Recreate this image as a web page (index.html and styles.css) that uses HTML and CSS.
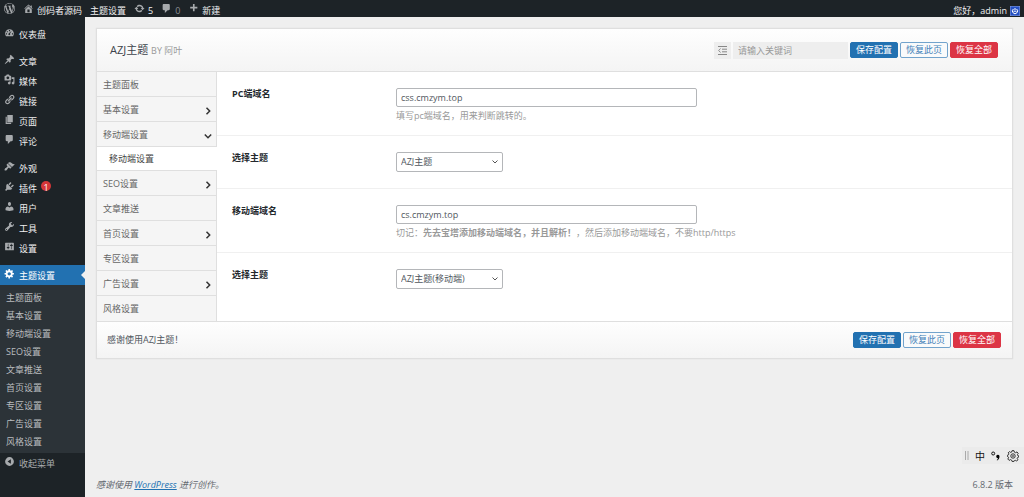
FILE: index.html
```html
<!DOCTYPE html>
<html lang="zh-CN">
<head>
<meta charset="utf-8">
<title>主题设置</title>
<link rel="stylesheet" href="styles.css">
</head>
<body>
<header class="adminbar">
  <a class="bar-item" href="#" aria-label="WordPress"><svg class="icon" viewBox="0 0 20 20"><path d="M20 10c0-5.51-4.49-10-10-10C4.48 0 0 4.49 0 10c0 5.52 4.48 10 10 10 5.51 0 10-4.48 10-10zM7.78 15.37L4.37 6.22c.55-.02 1.17-.08 1.17-.08.5-.06.44-1.13-.06-1.11 0 0-1.45.11-2.37.11-.18 0-.37 0-.58-.01C4.12 2.69 6.87 1.11 10 1.11c2.33 0 4.45.87 6.05 2.34-.68-.11-1.65.39-1.65 1.58 0 .74.45 1.36.9 2.1.35.61.55 1.36.55 2.46 0 1.49-1.4 5-1.4 5l-3.03-8.37c.54-.02.82-.17.82-.17.5-.05.44-1.25-.06-1.22 0 0-1.44.12-2.38.12-.87 0-2.33-.12-2.33-.12-.5-.03-.56 1.2-.06 1.22l.92.08 1.26 3.41zM17.41 10c.24-.64.74-1.87.43-4.25.7 1.29 1.05 2.71 1.05 4.25 0 3.29-1.73 6.24-4.4 7.78.97-2.59 1.94-5.2 2.92-7.78zM6.1 18.09C3.12 16.65 1.11 13.53 1.11 10c0-1.3.23-2.48.72-3.59C3.25 10.3 4.67 14.2 6.1 18.09zm4.03-6.63l2.58 6.98c-.86.29-1.76.45-2.71.45-.79 0-1.57-.11-2.29-.33.81-2.38 1.62-4.74 2.42-7.1z"/></svg></a>
  <a class="bar-item" href="#"><svg class="icon" viewBox="0 0 20 20"><path d="M16 8.5l1.53 1.53-1.06 1.06L10 4.6l-6.47 6.49-1.06-1.06L10 2.5l4 4v-2h2v4zm-6-2.46l6 5.99V18H4v-5.97zM12 17v-5H8v5h4z"/></svg><span>创码者源码</span></a>
  <a class="bar-item" href="#"><span>主题设置</span></a>
  <a class="bar-item" href="#"><svg class="icon" viewBox="0 0 20 20"><path d="M10.2 3.28c3.53 0 6.43 2.61 6.92 6h2.08l-3.5 4-3.5-4h2.32c-.45-1.97-2.21-3.45-4.32-3.45-1.45 0-2.73.71-3.54 1.78L4.95 5.66C6.23 4.2 8.11 3.28 10.2 3.28zm-.4 13.44c-3.52 0-6.43-2.61-6.92-6H.8l3.5-4c1.17 1.33 2.33 2.67 3.5 4H5.48c.45 1.97 2.21 3.45 4.32 3.45 1.45 0 2.73-.71 3.54-1.78l1.71 1.95c-1.28 1.46-3.15 2.38-5.25 2.38z"/></svg><span>5</span></a>
  <a class="bar-item" href="#"><svg class="icon" viewBox="0 0 20 20"><path d="M5 2h9c1.1 0 2 .9 2 2v7c0 1.1-.9 2-2 2h-2l-5 5v-5H5c-1.1 0-2-.9-2-2V4c0-1.1.9-2 2-2z"/></svg><span class="bar-zero">0</span></a>
  <a class="bar-item" href="#"><svg class="icon" viewBox="0 0 20 20"><path d="M17 7v3h-5v5H9v-5H4V7h5V2h3v5h5z"/></svg><span>新建</span></a>
  <a class="bar-item bar-user" href="#"><span>您好，admin</span><svg class="avatar" viewBox="0 0 10 10"><path class="avatar-bg" d="M0 0h10v10H0z"/><path class="avatar-mark" d="M3.4 3a2.6 2.6 0 1 0 3.2 0M5 2v2M3.5 5.2h3"/></svg></a>
</header>

<div class="shell">
  <nav class="sidebar" aria-label="主菜单">
    <ul class="menu">
      <li><a class="menu-link" href="#"><svg class="icon" viewBox="0 0 20 20"><path fill-rule="evenodd" d="M3.76 17h12.48c1.1-1.37 1.76-3.11 1.76-5 0-4.42-3.58-8-8-8s-8 3.58-8 8c0 1.89.66 3.63 1.76 5zM9 5.500h2v2H9zM5 7.500h2v2H5zM3.500 11.500h2v2h-2zM14.500 11.500h2v2h-2zM14 7l-3 5c1 2-.5 3-1.500 3s-2.300-1.500-1-3z"/></svg><span>仪表盘</span></a></li>
    </ul>
    <ul class="menu">
      <li><a class="menu-link" href="#"><svg class="icon" viewBox="0 0 20 20"><path d="M10.440 3.020l1.820-1.820 6.360 6.350-1.830 1.820c-1.050-.68-2.480-.57-3.410.36l-.75.75c-.92.93-1.040 2.350-.35 3.410l-1.830 1.820-2.410-2.410-2.800 2.790c-.42.42-3.380 2.710-3.800 2.290s1.860-3.390 2.280-3.810l2.790-2.790L4.100 9.360l1.830-1.820c1.050.69 2.480.57 3.400-.36l.75-.75c.93-.92 1.050-2.350.36-3.410z"/></svg><span>文章</span></a></li>
      <li><a class="menu-link" href="#"><svg class="icon" viewBox="0 0 20 20"><path d="M13 11V4c0-.55-.45-1-1-1h-1.670L9 1H5L3.670 3H2c-.55 0-1 .45-1 1v7c0 .55.45 1 1 1h10c.55 0 1-.45 1-1zM7 4.500c1.380 0 2.500 1.120 2.500 2.500S8.380 9.500 7 9.500 4.500 8.380 4.500 7 5.620 4.500 7 4.500zM14 6h5v10.500c0 1.380-1.120 2.500-2.500 2.500S14 17.880 14 16.500s1.120-2.500 2.500-2.500c.17 0 .34.02.5.05V9h-3V6zm-4 8.050V13h2v3.500c0 1.380-1.120 2.500-2.500 2.500S7 17.880 7 16.500 8.120 14 9.500 14c.17 0 .34.02.5.05z"/></svg><span>媒体</span></a></li>
      <li><a class="menu-link" href="#"><svg class="icon" viewBox="0 0 20 20"><path d="M17.740 2.760c1.680 1.690 1.680 4.410 0 6.100l-1.530 1.520c-1.120 1.120-2.700 1.470-4.140 1.090l2.620-2.610.76-.77.76-.76c.84-.84.84-2.200 0-3.040-.84-.85-2.200-.85-3.040 0l-.77.76-3.380 3.380c-.37-1.440-.02-3.020 1.100-4.140l1.520-1.530c1.690-1.680 4.420-1.680 6.100 0zM8.590 13.430l5.340-5.340c.42-.42.42-1.100 0-1.520-.44-.43-1.130-.39-1.530 0l-5.330 5.340c-.42.42-.42 1.100 0 1.520.44.43 1.130.39 1.520 0zm-.76 2.290l4.140-4.150c.38 1.440.03 3.020-1.090 4.140l-1.520 1.530c-1.690 1.680-4.410 1.680-6.100 0-1.680-1.680-1.680-4.420 0-6.100l1.530-1.520c1.120-1.120 2.700-1.470 4.140-1.100l-4.140 4.150c-.85.84-.85 2.200 0 3.050.84.84 2.200.84 3.040 0z"/></svg><span>链接</span></a></li>
      <li><a class="menu-link" href="#"><svg class="icon" viewBox="0 0 20 20"><path d="M6 15V2h10v13H6zm-1 1h8v2H3V5h2v11z"/></svg><span>页面</span></a></li>
      <li><a class="menu-link" href="#"><svg class="icon" viewBox="0 0 20 20"><path d="M5 2h9c1.100 0 2 .9 2 2v7c0 1.100-.9 2-2 2h-2l-5 5v-5H5c-1.100 0-2-.9-2-2V4c0-1.100.9-2 2-2z"/></svg><span>评论</span></a></li>
    </ul>
    <ul class="menu">
      <li><a class="menu-link" href="#"><svg class="icon" viewBox="0 0 20 20"><path d="M14.480 11.060L7.410 3.990l1.500-1.500c.5-.56 2.300-.47 3.510.32 1.210.8 1.430 1.280 2.910 2.100 1.180.64 2.450 1.260 4.450.85zm-.71.71L6.700 4.700 4.930 6.470c-.39.39-.39 1.020 0 1.410l1.060 1.060c.39.39.39 1.030 0 1.420-.6.6-1.430 1.110-2.210 1.690-.35.26-.7.53-1.010.84C1.430 14.230.4 16.080 1.400 17.070c.99 1 2.840-.03 4.180-1.360.31-.31.58-.66.85-1.020.57-.78 1.080-1.610 1.690-2.210.39-.39 1.020-.39 1.410 0l1.060 1.060c.39.39 1.020.39 1.410 0z"/></svg><span>外观</span></a></li>
      <li><a class="menu-link" href="#"><svg class="icon" viewBox="0 0 20 20"><path d="M13.110 4.360L9.870 7.600 8 5.730l3.240-3.240c.35-.34 1.050-.2 1.560.32.52.51.66 1.210.31 1.550zm-8 1.770l.91-1.120 9.010 9.010-1.190.84c-.71.71-2.630 1.160-3.820 1.160H6.140L4.900 17.260c-.59.59-1.540.59-2.120 0-.59-.58-.59-1.530 0-2.120l1.240-1.240v-3.880c0-1.130.4-3.190 1.090-3.890zm7.260 3.970l3.240-3.240c.34-.35 1.040-.21 1.550.31.52.51.66 1.210.31 1.550l-3.240 3.250z"/></svg><span>插件</span><span class="count">1</span></a></li>
      <li><a class="menu-link" href="#"><svg class="icon" viewBox="0 0 20 20"><path d="M10 9.250c-2.270 0-2.730-3.440-2.730-3.440C7 4.020 7.820 2 9.970 2c2.160 0 2.980 2.020 2.710 3.810 0 0-.41 3.440-2.680 3.440zm0 2.570L12.720 10c2.390 0 4.520 2.330 4.520 4.530v2.490s-3.650 1.130-7.240 1.130c-3.650 0-7.240-1.130-7.240-1.130v-2.490c0-2.250 1.940-4.480 4.470-4.480z"/></svg><span>用户</span></a></li>
      <li><a class="menu-link" href="#"><svg class="icon" viewBox="0 0 20 20"><path d="M16.680 9.770c-1.340 1.340-3.300 1.670-4.950.99l-5.410 6.520c-.99.99-2.590.99-3.580 0s-.99-2.590 0-3.570l6.520-5.420c-.68-1.650-.35-3.610.99-4.950 1.280-1.280 3.120-1.620 4.720-1.060l-2.890 2.890 2.820 2.820 2.860-2.870c.53 1.580.18 3.390-1.080 4.650zM3.810 16.210c.4.39 1.040.39 1.430 0 .4-.4.4-1.040 0-1.430-.39-.4-1.030-.4-1.430 0-.39.39-.39 1.030 0 1.430z"/></svg><span>工具</span></a></li>
      <li><a class="menu-link" href="#"><svg class="icon" viewBox="0 0 20 20"><path d="M18 16V4c0-.55-.45-1-1-1H3c-.55 0-1 .45-1 1v12c0 .55.45 1 1 1h14c.55 0 1-.45 1-1zM8 11h1c.55 0 1 .45 1 1s-.45 1-1 1H8v1.500c0 .28-.22.5-.5.5s-.5-.22-.5-.5V13H6c-.55 0-1-.45-1-1s.45-1 1-1h1V5.500c0-.28.22-.5.5-.5s.5.22.5.5V11zm5-2h-1c-.55 0-1-.45-1-1s.45-1 1-1h1V5.500c0-.28.22-.5.5-.5s.5.22.5.5V7h1c.55 0 1 .45 1 1s-.45 1-1 1h-1v5.500c0 .28-.22.5-.5.5s-.5-.22-.5-.5V9z"/></svg><span>设置</span></a></li>
    </ul>
    <a class="menu-link current" href="#"><svg class="icon" viewBox="0 0 20 20"><path d="M18 12h-2.180c-.17.7-.44 1.350-.81 1.930l1.540 1.540-2.100 2.100-1.540-1.540c-.58.36-1.230.63-1.910.79V19H8v-2.180c-.68-.16-1.330-.43-1.910-.79l-1.540 1.540-2.120-2.120 1.540-1.540c-.36-.58-.63-1.230-.79-1.910H1V9.030h2.170c.16-.7.44-1.350.8-1.940L2.430 5.550l2.100-2.100 1.540 1.540c.58-.37 1.240-.64 1.930-.81V2h3v2.180c.68.16 1.330.43 1.910.79l1.540-1.540 2.120 2.120-1.540 1.540c.36.59.64 1.240.8 1.940H18V12zm-8.500 1.500c1.660 0 3-1.340 3-3s-1.340-3-3-3-3 1.340-3 3 1.340 3 3 3z"/></svg><span>主题设置</span></a>
    <ul class="submenu">
      <li><a href="#">主题面板</a></li>
      <li><a href="#">基本设置</a></li>
      <li><a href="#">移动端设置</a></li>
      <li><a href="#">SEO设置</a></li>
      <li><a href="#">文章推送</a></li>
      <li><a href="#">首页设置</a></li>
      <li><a href="#">专区设置</a></li>
      <li><a href="#">广告设置</a></li>
      <li><a href="#">风格设置</a></li>
    </ul>
    <button class="menu-link collapse" type="button"><svg class="icon" viewBox="0 0 20 20"><path fill-rule="evenodd" d="M10 2a8 8 0 1 0 0 16 8 8 0 0 0 0-16zM12.500 6v8L6.500 10z"/></svg><span>收起菜单</span></button>
  </nav>

  <div class="content">
    <form class="panel">
      <div class="panel-head">
        <h1 class="title">AZJ主题 <small>BY 阿叶</small></h1>
        <div class="tools">
          <button class="expand" type="button" aria-label="展开全部"><svg viewBox="0 0 9 9"><path d="M0 .5h9M4 3.200h5M4 5.800h5M0 8.500h9M2.500 2.500L.7 4.500l1.800 2"/></svg></button>
          <input class="search" type="text" placeholder="请输入关键词" aria-label="请输入关键词">
          <button class="btn primary" type="button">保存配置</button>
          <button class="btn outline" type="button">恢复此页</button>
          <button class="btn danger" type="button">恢复全部</button>
        </div>
      </div>
      <div class="panel-body">
        <nav class="tabs" aria-label="设置分类">
          <a class="tab" href="#">主题面板</a>
          <a class="tab" href="#">基本设置<svg class="chev" viewBox="0 0 8 8"><path d="M2.500 .8L5.700 4 2.500 7.200"/></svg></a>
          <a class="tab" href="#">移动端设置<svg class="chev" viewBox="0 0 8 8"><path d="M.8 2.500L4 5.700l3.200-3.200"/></svg></a>
          <a class="tab sub" href="#">移动端设置</a>
          <a class="tab" href="#">SEO设置<svg class="chev" viewBox="0 0 8 8"><path d="M2.500 .8L5.700 4 2.500 7.200"/></svg></a>
          <a class="tab" href="#">文章推送</a>
          <a class="tab" href="#">首页设置<svg class="chev" viewBox="0 0 8 8"><path d="M2.500 .8L5.700 4 2.500 7.200"/></svg></a>
          <a class="tab" href="#">专区设置</a>
          <a class="tab" href="#">广告设置<svg class="chev" viewBox="0 0 8 8"><path d="M2.500 .8L5.700 4 2.500 7.200"/></svg></a>
          <a class="tab" href="#">风格设置</a>
        </nav>
        <div class="fields">
          <div class="field">
            <label class="field-name" for="pc-domain">PC端域名</label>
            <div class="field-main"><input class="text" id="pc-domain" type="text" value="css.cmzym.top"><p class="hint">填写pc端域名，用来判断跳转的。</p></div>
          </div>
          <div class="field">
            <label class="field-name" for="pc-theme">选择主题</label>
            <div class="field-main"><select class="select" id="pc-theme"><option>AZJ主题</option></select></div>
          </div>
          <div class="field">
            <label class="field-name" for="m-domain">移动端域名</label>
            <div class="field-main"><input class="text" id="m-domain" type="text" value="cs.cmzym.top"><p class="hint">切记：<b>先去宝塔添加移动端域名，并且解析！</b>，然后添加移动端域名，不要http/https</p></div>
          </div>
          <div class="field">
            <label class="field-name" for="m-theme">选择主题</label>
            <div class="field-main"><select class="select" id="m-theme"><option>AZJ主题(移动端)</option></select></div>
          </div>
        </div>
      </div>
      <div class="panel-foot">
        <span>感谢使用AZJ主题！</span>
        <div class="tools">
          <button class="btn primary" type="button">保存配置</button>
          <button class="btn outline" type="button">恢复此页</button>
          <button class="btn danger" type="button">恢复全部</button>
        </div>
      </div>
    </form>
    <footer class="page-foot">
      <em>感谢使用 <a href="#">WordPress</a> 进行创作。</em>
      <span>6.8.2 版本</span>
    </footer>
  </div>
</div>

<div class="ime">
  <svg class="ime-grip" viewBox="0 0 4 9"><path d="M.5 0v9M3 0v9"/></svg>
  <span>中</span>
  <svg class="ime-punct" viewBox="0 0 10 10"><circle cx="2.200" cy="2.500" r="1.500"/><path d="M6.800 3.800a1.600 1.600 0 0 1 1.700 1.700c0 1.800-.9 3.300-2.400 4l-.4-.6c.8-.5 1.200-1 1.300-1.700a1.700 1.700 0 1 1-.2-3.400z"/></svg>
  <svg class="ime-gear" viewBox="0 0 12 12"><path d="M5 .7h2l.4 1.500 1.200.5 1.400-.8L11.200 3.500l-.8 1.200.3.8 1 .3v1.300l-1.100.4-.4 1 .7 1.300-1.300 1.300-1.300-.8-1 .4L7 11.400H5l-.4-1.300-1.200-.5-1.300.8L.8 9l.8-1.300-.4-.9-.8-.3V5.200l1.100-.4.4-1L1.100 2.900 2.500 1.600l1.200.8.9-.3z"/><circle cx="6" cy="6" r="2.200"/><circle cx="6" cy="6" r=".5"/></svg>
</div>
</body>
</html>
```
FILE: styles.css
```css
* { box-sizing: border-box; }
body {
  margin: 0;
  min-height: 100vh;
  display: flex;
  flex-direction: column;
  background: #efefef;
  color: #50575e;
  font: 9px/14px "Open Sans", "Noto Sans CJK SC", sans-serif;
}
a { color: inherit; text-decoration: none; }
ul, p, h1 { margin: 0; padding: 0; list-style: none; }
button, input, select { font: inherit; margin: 0; }
svg { flex: none; }

.icon { width: 11px; height: 11px; fill: #a7aaad; }

.adminbar {
  display: flex;
  gap: 8px;
  height: 17px;
  padding: 3px 4px 0;
  background: #1d2327;
  color: #f0f0f1;
}
.bar-item { display: flex; gap: 3px; }
.bar-item span { padding-top: 1px; }
.bar-item .bar-zero { color: #8c8f94; }
.bar-user { margin-left: auto; }
.avatar { width: 10px; height: 10px; margin-top: 3px; }
.avatar-bg { fill: #2450c4; stroke: #8aa0d8; }
.avatar-mark { fill: none; stroke: #fff; }

.shell { flex: 1; display: flex; }

.sidebar {
  flex: none;
  width: 85px;
  padding-top: 7px;
  background: #1d2327;
  color: #f0f0f1;
}
.menu { padding-bottom: 7px; }
.menu-link {
  display: flex;
  gap: 4px;
  width: 100%;
  height: 20px;
  padding: 3px 0 0 4px;
}
.menu-link > span { padding-top: 1px; }
.menu-link .count {
  width: 10px;
  height: 10px;
  padding-top: 0;
  border-radius: 5px;
  background: #d63638;
  color: #fff;
  line-height: 13px;
  text-align: center;
}
.current {
  position: relative;
  background: #2271b1;
  color: #fff;
}
.current .icon { fill: #fff; }
.current::after {
  content: "";
  position: absolute;
  right: 0;
  top: 6px;
  border: 4px solid transparent;
  border-left-width: 0;
  border-right-color: #efefef;
}
.submenu {
  padding: 4px 6px 2px;
  background: #2c3338;
  color: #b9bcbf;
  line-height: 18px;
}
.submenu a { display: block; }
.collapse {
  border: 0;
  background: none;
  color: #a7aaad;
  text-align: left;
}

.content {
  flex: 1;
  display: flex;
  flex-direction: column;
  padding: 11px 11px 5px;
}
.panel {
  border: 1px solid #dfdfdf;
  box-shadow: 0 0 1px #ddd;
  background: #fff;
}
.panel-head, .panel-foot {
  display: flex;
  align-items: center;
  justify-content: space-between;
  background: linear-gradient(#fefefe, #f4f4f4);
}
.panel-head {
  height: 43px;
  padding: 0 14px 0 13px;
  border-bottom: 1px solid #dfdfdf;
}
.panel-foot {
  height: 37px;
  padding: 0 11px 1px 10px;
  border-top: 1px solid #dfdfdf;
}
.title { font-size: 11px; font-weight: 400; color: #3c434a; }
.title small { font-size: 9px; color: #999; }
.tools { display: flex; gap: 2px; }
.expand {
  width: 17px;
  height: 17px;
  padding: 4px;
  border: 0;
  background: #eee;
}
.expand svg { display: block; fill: none; stroke: #888; }
.search {
  width: 115px;
  height: 17px;
  padding: 0 5px;
  border: 0;
  background: #eee;
}
.search::placeholder { color: #999; }
.btn {
  width: 48px;
  height: 16px;
  padding: 0;
  border: 1px solid;
  border-radius: 2px;
  line-height: 14px;
}
.primary { background: #2271b1; border-color: #2271b1; color: #fff; }
.outline { background: #f9fafb; border-color: #72a3cc; color: #3f80b8; }
.danger { background: #dc3545; border-color: #dc3545; color: #fff; }

.panel-body { display: flex; }
.tabs {
  flex: none;
  width: 120px;
  border-right: 1px solid #dfdfdf;
  background: #f5f5f5;
  color: #666;
}
.tab {
  display: flex;
  align-items: center;
  justify-content: space-between;
  height: 25px;
  padding: 1px 4px 0 6px;
  border-bottom: 1px solid #dfdfdf;
}
.tab:last-child { border-bottom: 0; }
.tab.sub {
  height: 24px;
  padding-left: 12px;
  margin-right: -1px;
  background: #fff;
  color: #444;
}
.chev {
  width: 8px;
  height: 8px;
  margin-top: 3px;
  fill: none;
  stroke: #333;
  stroke-width: 1.500;
}

.fields { flex: 1; }
.field {
  display: flex;
  padding: 16px 15px;
  border-bottom: 1px solid #f0f0f0;
}
.field:last-child { border-bottom: 0; }
.field-name {
  width: 164px;
  line-height: 12px;
  font-weight: 700;
  color: #23282d;
}
.field-main { flex: 1; }
.text, .select {
  display: block;
  border: 1px solid #b4b6b9;
  border-radius: 2px;
  color: #50575e;
}
.text { width: 301px; height: 19px; padding: 0 4px; background: #fff; }
.select {
  appearance: none;
  width: 107px;
  height: 20px;
  padding: 0 16px 0 4px;
  background: #fff url("data:image/svg+xml,%3Csvg xmlns='http://www.w3.org/2000/svg' viewBox='0 0 6 6'%3E%3Cpath d='M.5 1.500L3 4l2.500-2.500' fill='none' stroke='%23555'/%3E%3C/svg%3E") no-repeat right 4px center / 6px 6px;
}
.hint { margin-bottom: -4px; padding-top: 2px; color: #999; }

.page-foot {
  display: flex;
  justify-content: space-between;
  margin-top: auto;
  color: #646970;
}
.page-foot a { color: #2271b1; text-decoration: underline; }

.ime {
  position: fixed;
  right: 0;
  bottom: 33px;
  display: flex;
  align-items: center;
  gap: 6px;
  height: 17px;
  padding: 0 5px 0 3px;
  background: #ebebeb;
  color: #111;
  font-size: 10px;
}
.ime-grip { width: 4px; height: 9px; stroke: #aaa; }
.ime-punct { width: 10px; height: 10px; }
.ime-punct circle { fill: none; stroke: #111; }
.ime-gear { width: 12px; height: 12px; fill: none; stroke: #333; }
```
